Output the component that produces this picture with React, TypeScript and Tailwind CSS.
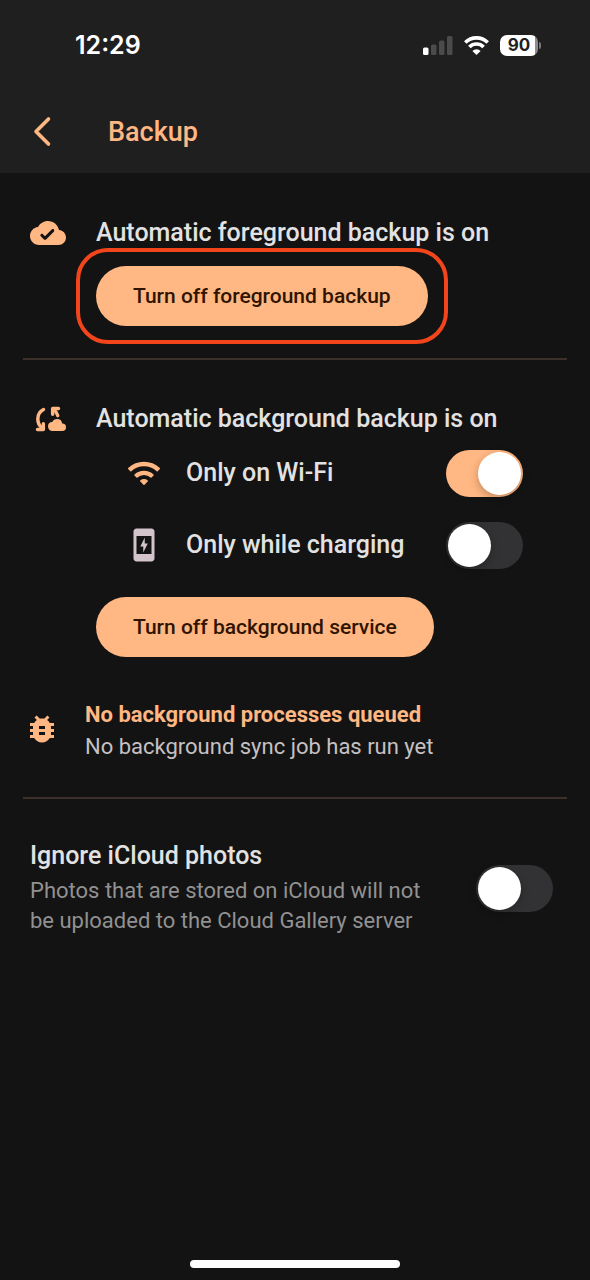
import React, { useState } from "react";
import { MdBugReport, MdChargingStation } from "react-icons/md";

function StatusBar() {
  return (
    <div className="flex h-[90px] items-center justify-between pl-[75px] pr-[49px]">
      <span className="font-[Inter,sans-serif] text-[25px] leading-8 font-semibold text-white">12:29</span>
      <div className="flex items-center gap-[11px]">
        <svg width="30" height="19" viewBox="0 0 30 19" aria-hidden="true">
          <rect x="0" y="11.500" width="5.5" height="7.500" rx="1.5" fill="#fff" />
          <rect x="8" y="8.500" width="5.5" height="10.500" rx="1.5" fill="#4b4b4b" />
          <rect x="16" y="4.500" width="5.5" height="14.500" rx="1.5" fill="#4b4b4b" />
          <rect x="24" y="0" width="5.5" height="19" rx="1.5" fill="#4b4b4b" />
        </svg>
        <svg width="25" height="19" viewBox="0 0 25 19" fill="none" stroke="#fff" aria-hidden="true">
          <path d="M1.3 6.500A15.8 15.8 0 0 1 23.7 6.500" strokeWidth="3.6" />
          <path d="M5.4 11A10 10 0 0 1 19.6 11" strokeWidth="3.6" />
          <path d="M12.5 19L8.400 14.900A5.8 5.8 0 0 1 16.600 14.900Z" fill="#fff" stroke="none" />
        </svg>
        <div className="flex items-center gap-px">
          <div className="flex h-[21px] w-[38px] items-center justify-center rounded-[7px] bg-linear-to-r from-white from-92% to-[#8c8c8c] to-92% font-[Inter,sans-serif] text-[17px] leading-5 font-bold text-[#1f1f1f]">
            90
          </div>
          <div className="h-[7px] w-[2px] rounded-r-full bg-[#777]" />
        </div>
      </div>
    </div>
  );
}

function CloudDoneIcon() {
  return (
    <svg className="size-9 shrink-0" viewBox="0 0 24 24" fill="currentColor" aria-hidden="true">
      <path d="M19.35 10.04C18.67 6.59 15.64 4 12 4 9.11 4 6.6 5.64 5.35 8.04 2.34 8.36 0 10.91 0 14c0 3.31 2.69 6 6 6h13c2.76 0 5-2.24 5-5 0-2.64-2.05-4.78-4.65-4.96zm-8.64 6.25c-.39.39-1.02.39-1.41 0L7.2 14.2c-.39-.39-.39-1.02 0-1.41.39-.39 1.02-.39 1.41 0L10 14.18l4.48-4.48c.39-.39 1.02-.39 1.41 0 .39.39.39 1.02 0 1.41l-5.18 5.18z" />
    </svg>
  );
}

function CloudSyncIcon() {
  return (
    <svg className="size-9 shrink-0" viewBox="0 0 24 24" fill="none" aria-hidden="true">
      <g stroke="currentColor" strokeWidth="2.3" strokeLinecap="round" strokeLinejoin="round">
        <path d="M9 5.7A7 7 0 0 0 5.200 12c0 2.3 1 4.400 2.800 5.900" />
        <path d="M5 19h3.900v-3.900" />
        <path d="M19 5h-3.900v3.900" />
        <path d="M15.600 5.600A7.200 7.200 0 0 1 18.500 9.800" />
      </g>
      <path
        fill="currentColor"
        d="M21.5 14.98c-.02 0-.03 0-.05.01A3.49 3.49 0 0 0 18 12c-1.4 0-2.6.83-3.16 2.02A2.987 2.987 0 0 0 12 17c0 1.66 1.34 3 3 3l6.5-.02a2.5 2.5 0 0 0 0-5z"
      />
    </svg>
  );
}

function WifiIcon() {
  return (
    <svg className="size-9 shrink-0 text-[#ffb783]" viewBox="0 0 24 24" fill="currentColor" aria-hidden="true">
      <path
        stroke="currentColor"
        strokeWidth="1"
        strokeLinejoin="round"
        d="M1.8 9l1.4 1.4c4.97-4.5 12.63-4.5 17.6 0L22.200 9C16.500 3.600 7.500 3.600 1.800 9zM6 13.300l1.300 1.300c2.700-2.400 6.700-2.400 9.400 0L18 13.300C14.600 10.200 9.400 10.200 6 13.300zM9.900 17.300L12 19.400l2.100-2.100c-1.200-.9-3-.9-4.200 0z"
      />
    </svg>
  );
}

function Toggle({ id, initial = false }: { id: string; initial?: boolean }) {
  const [on, setOn] = useState(initial);
  return (
    <span className="relative flex h-[47px] w-[77px] shrink-0">
      <input
        id={id}
        type="checkbox"
        role="switch"
        checked={on}
        onChange={() => setOn(!on)}
        className="peer h-full w-full cursor-pointer appearance-none rounded-full bg-[#323234] checked:bg-[#ffb783]"
      />
      <span className="pointer-events-none absolute top-[2px] left-[2px] size-[43px] rounded-full bg-white shadow-[0_3px_8px_rgba(0,0,0,0.25)] peer-checked:left-8" />
    </span>
  );
}

function PillButton({ children }: { children: React.ReactNode }) {
  return (
    <button
      type="button"
      className="h-[60px] rounded-full bg-[#ffb783] px-[37px] text-[21px] leading-7 font-medium whitespace-nowrap text-[#301400]"
    >
      {children}
    </button>
  );
}

function OptionRow({ id, icon, label, initial }: { id: string; icon: React.ReactNode; label: string; initial?: boolean }) {
  return (
    <div className="flex h-[72px] items-center pr-11 pl-[30px]">
      {icon}
      <label htmlFor={id} className="ml-6 flex-1 text-[25px] leading-8 font-medium">
        {label}
      </label>
      <Toggle id={id} initial={initial} />
    </div>
  );
}

export default function App() {
  return (
    <div className="flex min-h-screen flex-col bg-[#131313] font-[Roboto,sans-serif] text-[#e3e2e2]">
      <header className="bg-[#1f1f1f] pb-[11px] text-[#ffb783]">
        <StatusBar />
        <div className="flex h-[72px] items-center pt-3 pl-[30px]">
          <button type="button" aria-label="Back" className="flex w-[78px]">
            <svg width="24" height="32" viewBox="0 0 24 32" fill="none" stroke="currentColor" strokeWidth="3.6" strokeLinecap="round" strokeLinejoin="round" aria-hidden="true">
              <path d="M18.500 3L6 15.500l12.500 12.500" />
            </svg>
          </button>
          <h1 className="text-[27px] leading-8 font-medium">Backup</h1>
        </div>
      </header>

      <main className="flex-1 px-[23px]">
        <section className="flex border-b-2 border-[#3c302a] pt-[42px] pb-[14px] pl-[7px]">
          <div className="text-[#ffb783]">
            <CloudDoneIcon />
          </div>
          <div className="ml-[30px]">
            <h2 className="text-[25px] leading-9 font-medium">Automatic foreground backup is on</h2>
            <div className="mt-[-3px] ml-[-20px] w-fit rounded-[32px] border-4 border-[#f2451c] px-4 py-[14px]">
              <PillButton>Turn off foreground backup</PillButton>
            </div>
          </div>
        </section>

        <section className="flex pt-[41px] pl-[7px]">
          <div className="text-[#ffb783]">
            <CloudSyncIcon />
          </div>
          <div className="ml-[30px] flex-1">
            <h2 className="text-[25px] leading-9 font-medium">Automatic background backup is on</h2>
            <OptionRow id="wifi-only" icon={<WifiIcon />} label="Only on Wi-Fi" initial />
            <OptionRow
              id="charging-only"
              icon={<MdChargingStation className="size-9 shrink-0 text-[#d3c4cb]" />}
              label="Only while charging"
            />
            <div className="mt-4">
              <PillButton>Turn off background service</PillButton>
            </div>
          </div>
        </section>

        <section className="flex items-start border-b-2 border-[#3c302a] pt-[42px] pb-[34px] pl-px">
          <MdBugReport className="mt-3 size-9 shrink-0 text-[#ffb783]" />
          <div className="ml-[25px]">
            <h2 className="text-[22px] leading-8 font-bold text-[#ffb783]">No background processes queued</h2>
            <p className="text-[22px] leading-8 text-[#c6c0c2]">No background sync job has run yet</p>
          </div>
        </section>

        <section className="flex items-center justify-between pt-[41px] pr-[14px] pl-[7px]">
          <label htmlFor="ignore-icloud" className="block w-[400px]">
            <span className="block text-[25px] leading-8 font-medium">Ignore iCloud photos</span>
            <span className="mt-1 block text-[22px] leading-[30px] text-[#929191]">
              Photos that are stored on iCloud will not be uploaded to the Cloud Gallery server
            </span>
          </label>
          <Toggle id="ignore-icloud" />
        </section>
      </main>

      <div className="mx-auto mb-3 h-2 w-[210px] rounded-full bg-white" />
    </div>
  );
}
